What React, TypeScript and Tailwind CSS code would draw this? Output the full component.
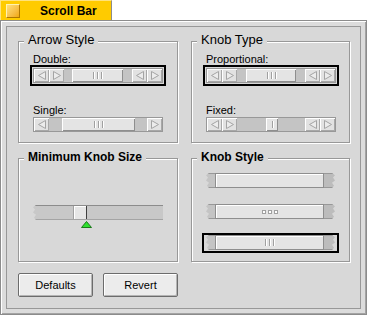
import React from "react";

const Tri = ({ dir }: { dir: "l" | "r" }) => (
  <svg width="8" height="9" viewBox="0 0 8 9">
    <polygon
      points={dir === "l" ? "7.5,0.5 0.5,4.5 7.5,8.5" : "0.5,0.5 7.5,4.5 0.5,8.5"}
      fill="#ececec"
      stroke="#a4a4a4"
    />
  </svg>
);

const Arrow = ({ dir }: { dir: "l" | "r" }) => (
  <div className="w-[15px] h-full shrink-0 flex items-center justify-center bg-[#e2e2e2] shadow-[inset_1px_1px_0_#fff,inset_-1px_-1px_0_#a8a8a8]">
    <Tri dir={dir} />
  </div>
);

const Trough = ({ className = "" }: { className?: string }) => (
  <div className={`h-full bg-[#c4c4c4] ${className}`} />
);

const Lines = ({ n = 3 }: { n?: number }) => (
  <div className="flex gap-[3px]">
    {Array.from({ length: n }).map((_, i) => (
      <div key={i} className="w-[1px] h-[7px] bg-[#a0a0a0] shadow-[1px_0_0_#fff]" />
    ))}
  </div>
);

const Knob = ({ className = "", children }: { className?: string; children?: React.ReactNode }) => (
  <div
    className={`h-full shrink-0 flex items-center justify-center bg-[#e4e4e4] shadow-[inset_1px_1px_0_#fff,inset_-1px_-1px_0_#8e8e8e] ${className}`}
  >
    {children}
  </div>
);

const Bar = ({ children }: { children: React.ReactNode }) => (
  <div className="flex w-[130px] h-[15px] border border-[#989898] bg-[#c4c4c4]">{children}</div>
);

const Selected = ({ children }: { children: React.ReactNode }) => (
  <div className="ml-[11px] w-[136px] border-2 border-black p-[1px]">{children}</div>
);

function Group({
  title,
  bold,
  children,
}: {
  title: string;
  bold?: boolean;
  children: React.ReactNode;
}) {
  return (
    <div className="relative flex flex-col items-start border border-[#989898] shadow-[inset_1px_1px_0_#fff,1px_1px_0_#fff]">
      <span
        className={`absolute left-[5px] top-[-9px] px-[4px] bg-[#d8d8d8] leading-[14px] ${
          bold ? "text-[12px] font-bold" : "text-[13px]"
        }`}
      >
        {title}
      </span>
      {children}
    </div>
  );
}

const Caption = ({ text, top }: { text: string; top: string }) => (
  <div className={`ml-[14px] ${top} text-[11px] leading-[12px]`}>{text}</div>
);

const tornLeft =
  "[clip-path:polygon(3px_0,100%_0,100%_100%,3px_100%,1px_85%,3px_65%,0_50%,2px_30%,0_15%)]";
const tornRight =
  "[clip-path:polygon(0_0,calc(100%_-_3px)_0,100%_15%,calc(100%_-_2px)_30%,100%_50%,calc(100%_-_3px)_65%,calc(100%_-_1px)_85%,calc(100%_-_3px)_100%,0_100%)]";

function KnobSample({ grip }: { grip: "none" | "dots" | "lines" }) {
  return (
    <div className="flex w-[129px] h-[15px]">
      <div className={`w-[9px] h-full bg-[#c4c4c4] border-y border-[#989898] ${tornLeft}`} />
      <div className="flex-1 h-full flex items-center justify-center border border-[#8e8e8e] bg-[#e4e4e4] shadow-[inset_1px_1px_0_#fff]">
        {grip === "lines" && <Lines />}
        {grip === "dots" && (
          <div className="flex gap-[2px]">
            <div className="w-[4px] h-[4px] border border-[#a0a0a0] bg-white" />
            <div className="w-[4px] h-[4px] border border-[#a0a0a0] bg-white" />
            <div className="w-[4px] h-[4px] border border-[#a0a0a0] bg-white" />
          </div>
        )}
      </div>
      <div className={`w-[11px] h-full bg-[#bcbcbc] border-y border-[#989898] ${tornRight}`} />
    </div>
  );
}

const Button = ({ label }: { label: string }) => (
  <button className="w-[75px] h-[24px] rounded-[2px] border border-[#6c6c6c] bg-[#ececec] shadow-[inset_1px_1px_0_#fff,inset_-1px_-1px_0_#b4b4b4] text-[11px] leading-none text-black">
    {label}
  </button>
);

export default function App() {
  return (
    <div className="w-[371px] h-[315px] bg-white text-black font-['Liberation_Sans',Arial,sans-serif]">
      {/* tab */}
      <div className="w-[112px] h-[20px] flex items-center bg-[#ffcb00] border-t border-l border-[#ffe27a] border-r border-r-[#8c8c8c]">
        <div className="ml-[5px] w-[14px] h-[14px] border border-t-[#fff3b0] border-l-[#fff3b0] border-b-[#b07800] border-r-[#b07800] bg-gradient-to-br from-[#ffe07a] to-[#f0a800]" />
        <span className="ml-[20px] text-[12px] font-bold leading-none">Scroll Bar</span>
      </div>

      {/* window frame */}
      <div className="w-[367px] h-[295px] border border-[#8c8c8c] p-[5px] bg-[#dcdcdc] shadow-[inset_1px_1px_0_#fff,inset_-1px_-1px_0_#a4a4a4]">
        <div className="h-full border border-[#989898] bg-[#d8d8d8] pl-[11px] pt-[14px] pr-[10px]">
          <div className="grid grid-cols-[160px_159px] grid-rows-[102px_104px] gap-x-[13px] gap-y-[15px]">
            <Group title="Arrow Style">
              <Caption text="Double:" top="mt-[11px]" />
              <Selected>
                <Bar>
                  <Arrow dir="l" />
                  <Arrow dir="r" />
                  <Trough className="w-[8px]" />
                  <Knob className="w-[51px]">
                    <Lines />
                  </Knob>
                  <Trough className="flex-1" />
                  <Arrow dir="l" />
                  <Arrow dir="r" />
                </Bar>
              </Selected>
              <Caption text="Single:" top="mt-[18px]" />
              <div className="ml-[14px] mt-[1px]">
                <Bar>
                  <Arrow dir="l" />
                  <Trough className="w-[13px]" />
                  <Knob className="w-[73px]">
                    <Lines />
                  </Knob>
                  <Trough className="flex-1" />
                  <Arrow dir="r" />
                </Bar>
              </div>
            </Group>

            <Group title="Knob Type">
              <Caption text="Proportional:" top="mt-[11px]" />
              <Selected>
                <Bar>
                  <Arrow dir="l" />
                  <Arrow dir="r" />
                  <Trough className="w-[9px]" />
                  <Knob className="w-[50px]">
                    <Lines />
                  </Knob>
                  <Trough className="flex-1" />
                  <Arrow dir="l" />
                  <Arrow dir="r" />
                </Bar>
              </Selected>
              <Caption text="Fixed:" top="mt-[18px]" />
              <div className="ml-[14px] mt-[1px]">
                <Bar>
                  <Arrow dir="l" />
                  <Arrow dir="r" />
                  <Trough className="w-[29px]" />
                  <Knob className="w-[12px]">
                    <Lines n={1} />
                  </Knob>
                  <Trough className="flex-1" />
                  <Arrow dir="l" />
                  <Arrow dir="r" />
                </Bar>
              </div>
            </Group>

            <Group title="Minimum Knob Size" bold>
              <div
                className={`ml-[14px] mt-[46px] flex w-[130px] h-[15px] bg-[#c8c8c8] border-t border-t-[#8c8c8c] border-b border-b-[#a4a4a4] ${tornLeft}`}
              >
                <div className="w-[40px]" />
                <div className="w-[14px] h-full bg-[#e6e6e6] border-l border-l-[#a0a0a0] border-r border-r-[#404040] shadow-[inset_1px_1px_0_#fff]" />
                <div className={`flex-1 h-full ${tornRight}`} />
              </div>
              <div className="ml-[62px] mt-[1px]">
                <svg width="11" height="7" viewBox="0 0 11 7">
                  <polygon points="5.5,0.5 10.5,6.5 0.5,6.5" fill="#2ee02e" stroke="#1a7a1a" />
                </svg>
              </div>
            </Group>

            <Group title="Knob Style" bold>
              <div className="ml-[14px] mt-[14px]">
                <KnobSample grip="none" />
              </div>
              <div className="ml-[14px] mt-[16px]">
                <KnobSample grip="dots" />
              </div>
              <div className="ml-[10px] mt-[14px] border-2 border-black px-[2px] pb-[1px]">
                <KnobSample grip="lines" />
              </div>
            </Group>
          </div>

          <div className="mt-[11px] flex gap-[10px]">
            <Button label="Defaults" />
            <Button label="Revert" />
          </div>
        </div>
      </div>
    </div>
  );
}
